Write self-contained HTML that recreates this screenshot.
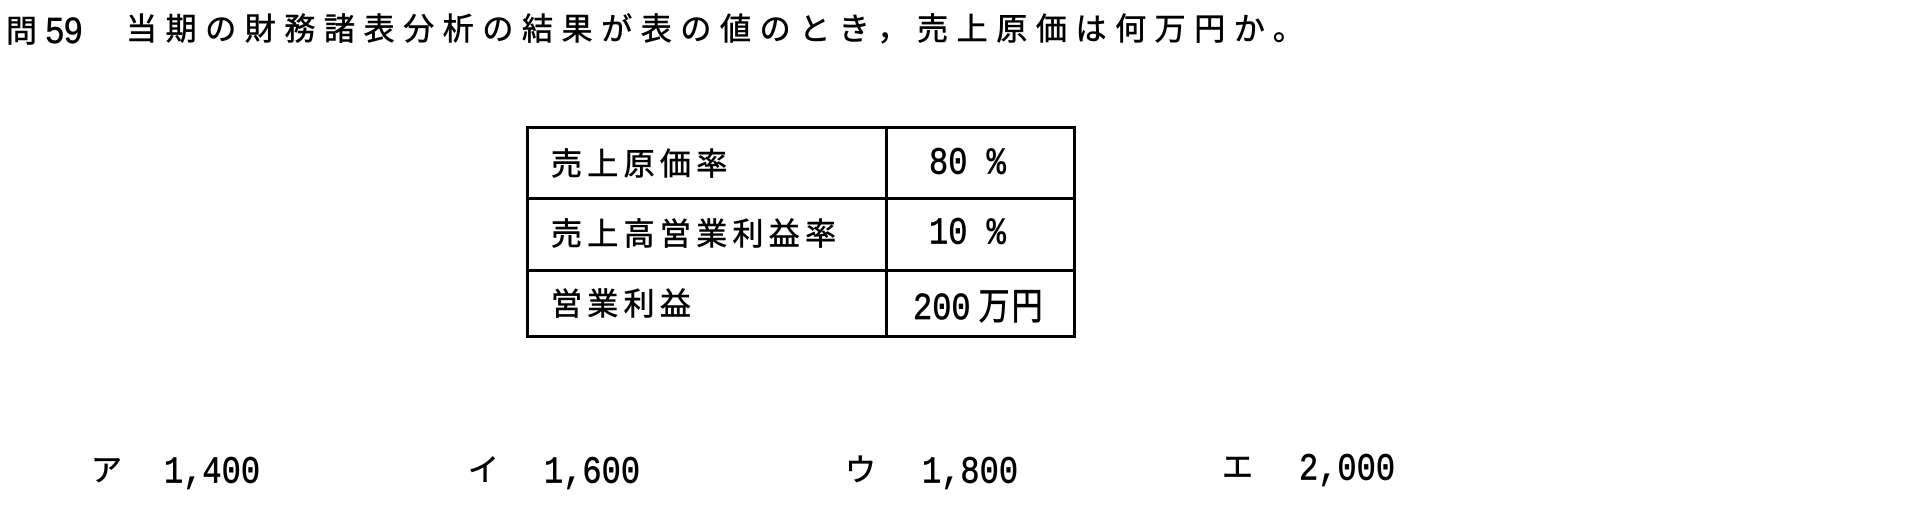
<!DOCTYPE html>
<html><head><meta charset="utf-8"><style>
body{margin:0;width:1907px;height:518px;background:#fff;position:relative;overflow:hidden;font-family:"Liberation Sans","Noto Sans CJK JP",sans-serif;color:#000}
.t{position:absolute;white-space:nowrap;line-height:1;-webkit-text-stroke:0.6px #000}
.j{font-size:31px;letter-spacing:8.6px}
.k{font-size:31px;letter-spacing:5.3px}
.m{font-family:"Liberation Mono","Noto Sans CJK JP",monospace;font-size:32px;transform:scaleY(1.2);transform-origin:0 50%}
.box{position:absolute;left:526px;top:126px;width:544px;height:206px;border:3px solid #000}
.h{position:absolute;left:0;width:544px;height:3px;background:#000}
.v{position:absolute;top:0;left:356px;width:3px;height:206px;background:#000}
</style></head><body>
<div class="t j" style="left:6px;top:14px">問<span style="font-family:'Liberation Sans';letter-spacing:0;font-size:33px;display:inline-block;transform:scaleY(1.1)">59</span></div>
<div class="t j" style="left:126px;top:14px">当期の財務諸表分析の結果が表の値のとき，売上原価は何万円か。</div>
<div class="box"><div class="h" style="top:68px"></div><div class="h" style="top:140px"></div><div class="v"></div></div>
<div class="t k" style="left:551px;top:149px">売上原価率</div>
<div class="t k" style="left:551px;top:219px">売上高営業利益率</div>
<div class="t k" style="left:551px;top:289px">営業利益</div>
<div class="t m" style="left:929px;top:148px">80 %</div>
<div class="t m" style="left:929px;top:218px">10 %</div>
<div class="t m" style="left:913px;top:288px">200<span style="font-family:'Noto Sans CJK JP';font-size:31px;margin-left:8px;letter-spacing:2px">万円</span></div>
<div class="t j" style="left:91px;top:455px">ア</div><div class="t m" style="left:164px;top:457px">1,400</div>
<div class="t j" style="left:468px;top:455px">イ</div><div class="t m" style="left:544px;top:457px">1,600</div>
<div class="t j" style="left:845px;top:455px">ウ</div><div class="t m" style="left:922px;top:457px">1,800</div>
<div class="t j" style="left:1222px;top:452px">エ</div><div class="t m" style="left:1299px;top:454px">2,000</div>
</body></html>
